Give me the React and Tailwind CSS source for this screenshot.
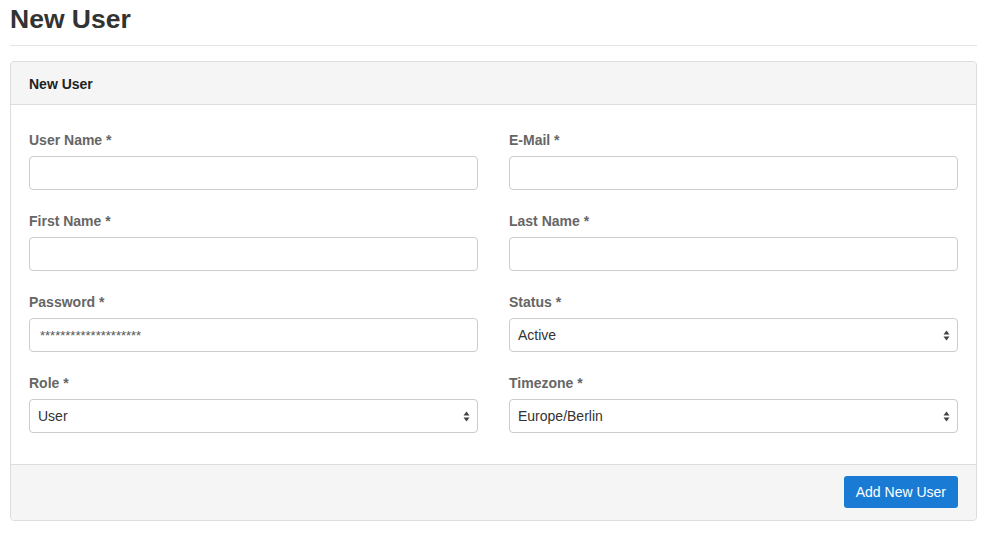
import React from "react";

const font = { fontFamily: '"Liberation Sans", Arial, Helvetica, sans-serif' };

function Field({ label, children }) {
  return (
    <div className="mb-[21px]">
      <label className="block text-[14px] leading-[20px] font-bold text-[#666] mb-[6px]">
        {label}
      </label>
      {children}
    </div>
  );
}

function TextInput({ value = "", small }) {
  return (
    <input
      type="text"
      defaultValue={value}
      className={`block w-full h-[34px] border border-[#ccc] rounded-[4px] bg-white px-[8px] text-[#555] outline-none ${
        small ? "text-[13px] pl-[10px]" : "text-[14px]"
      }`}
      style={font}
    />
  );
}

function SelectInput({ value }) {
  return (
    <div className="relative">
      <select
        defaultValue={value}
        className="block w-full h-[34px] border border-[#ccc] rounded-[4px] bg-white pl-[8px] pr-[24px] text-[14px] text-[#333] appearance-none outline-none"
        style={font}
      >
        <option>{value}</option>
      </select>
      <svg
        className="absolute right-[8px] top-[12px] pointer-events-none"
        width="7"
        height="11"
        viewBox="0 0 7 11"
      >
        <path d="M3.5 0.5 L6.5 4.5 L0.5 4.5 Z" fill="#444" />
        <path d="M3.5 10.5 L6.5 6.5 L0.5 6.5 Z" fill="#444" />
      </svg>
    </div>
  );
}

export default function App() {
  return (
    <div className="bg-white min-h-[535px] px-[10px] text-[#333]" style={font}>
      <h1 className="text-[26.5px] font-bold leading-[32px] pt-[3px] pb-[10px] border-b border-[#e5e5e5] text-[#333]">
        New User
      </h1>

      <div className="mt-[15px] border border-[#ddd] rounded-[4px] bg-white">
        <div className="bg-[#f5f5f5] border-b border-[#ddd] h-[43px] pt-[2px] px-[18px] flex items-center rounded-t-[4px]">
          <h3 className="text-[14px] font-bold text-[#222]">New User</h3>
        </div>

        <div className="px-[18px] pt-[25px] pb-[10px] grid grid-cols-2 gap-x-[31px]">
          <Field label="User Name *">
            <TextInput />
          </Field>
          <Field label="E-Mail *">
            <TextInput />
          </Field>
          <Field label="First Name *">
            <TextInput />
          </Field>
          <Field label="Last Name *">
            <TextInput />
          </Field>
          <Field label="Password *">
            <TextInput value="********************" small />
          </Field>
          <Field label="Status *">
            <SelectInput value="Active" />
          </Field>
          <Field label="Role *">
            <SelectInput value="User" />
          </Field>
          <Field label="Timezone *">
            <SelectInput value="Europe/Berlin" />
          </Field>
        </div>

        <div className="bg-[#f5f5f5] border-t border-[#ddd] px-[18px] pt-[11px] pb-[12px] flex justify-end rounded-b-[4px]">
          <button
            className="h-[32px] px-[12px] bg-[#1a7bd4] text-white text-[14px] rounded-[3px]"
            style={font}
          >
            Add New User
          </button>
        </div>
      </div>
    </div>
  );
}
